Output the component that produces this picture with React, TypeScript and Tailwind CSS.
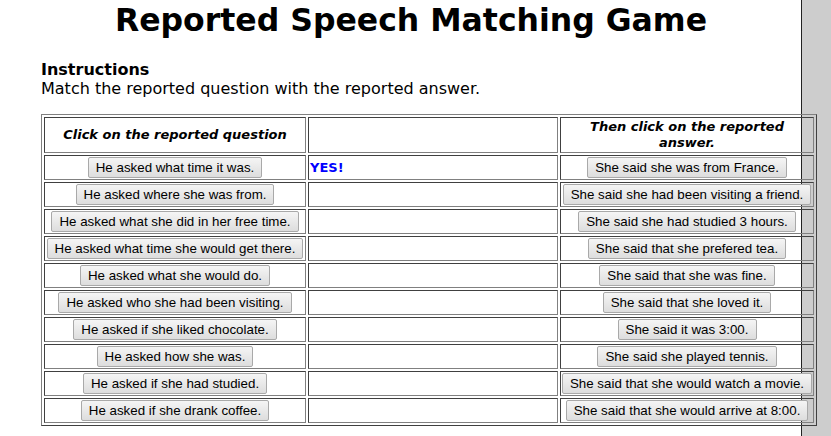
import React from 'react';

const questions = [
  'He asked what time it was.',
  'He asked where she was from.',
  'He asked what she did in her free time.',
  'He asked what time she would get there.',
  'He asked what she would do.',
  'He asked who she had been visiting.',
  'He asked if she liked chocolate.',
  'He asked how she was.',
  'He asked if she had studied.',
  'He asked if she drank coffee.',
];

const answers = [
  'She said she was from France.',
  'She said she had been visiting a friend.',
  'She said she had studied 3 hours.',
  'She said that she prefered tea.',
  'She said that she was fine.',
  'She said that she loved it.',
  'She said it was 3:00.',
  'She said she played tennis.',
  'She said that she would watch a movie.',
  'She said that she would arrive at 8:00.',
];

const cell =
  'border border-t-[#404040] border-l-[#404040] border-b-[#808080] border-r-[#808080] p-px';

const GameButton: React.FC<{ label: string }> = ({ label }) => (
  <div className="flex justify-center">
    <button className="h-[21px] px-[7px] font-['Liberation_Sans',Arial,sans-serif] text-[13.33px] leading-none text-black border border-[#a9a9a9] rounded-[2px] bg-linear-to-b from-[#f5f5f5] to-[#dddddd] whitespace-nowrap">
      {label}
    </button>
  </div>
);

export default function App() {
  return (
    <div className="relative min-h-[436px] overflow-hidden bg-white font-['DejaVu_Sans',Verdana,sans-serif] text-black">
      {/* grey frame edge on the right */}
      <div className="absolute top-0 bottom-0 left-[801px] right-0 bg-[#cdcdcd] border-l border-[#222222]" />

      <div className="relative pl-[41px] pt-[2px]">
        <h1 className="w-[740px] text-center text-[31.5px] font-bold leading-[37px]">
          Reported Speech Matching Game
        </h1>

        <div className="mt-[22px] text-[16px] leading-[18.6px]">
          <div className="font-bold">Instructions</div>
          <div>Match the reported question with the reported answer.</div>
        </div>

        <table className="mt-[16px] w-[776px] table-fixed border-separate border-spacing-[2px] border border-t-[#808080] border-l-[#808080] border-b-[#404040] border-r-[#404040]">
          <thead>
            <tr>
              <th className={`${cell} w-[262px] text-[13px] leading-[16px] font-bold italic`}>
                Click on the reported question
              </th>
              <th className={`${cell} w-[250px]`}></th>
              <th className={`${cell} text-[13px] leading-[16px] font-bold italic`}>
                Then click on the reported answer.
              </th>
            </tr>
          </thead>
          <tbody>
            {questions.map((q, i) => (
              <tr key={q}>
                <td className={`${cell} text-center`}>
                  <GameButton label={q} />
                </td>
                <td className={`${cell} text-left text-[13px] font-bold text-[#0000ff] leading-[16px]`}>
                  {i === 0 ? 'YES!' : ''}
                </td>
                <td className={`${cell} text-center`}>
                  <GameButton label={answers[i]} />
                </td>
              </tr>
            ))}
          </tbody>
        </table>
      </div>
    </div>
  );
}
